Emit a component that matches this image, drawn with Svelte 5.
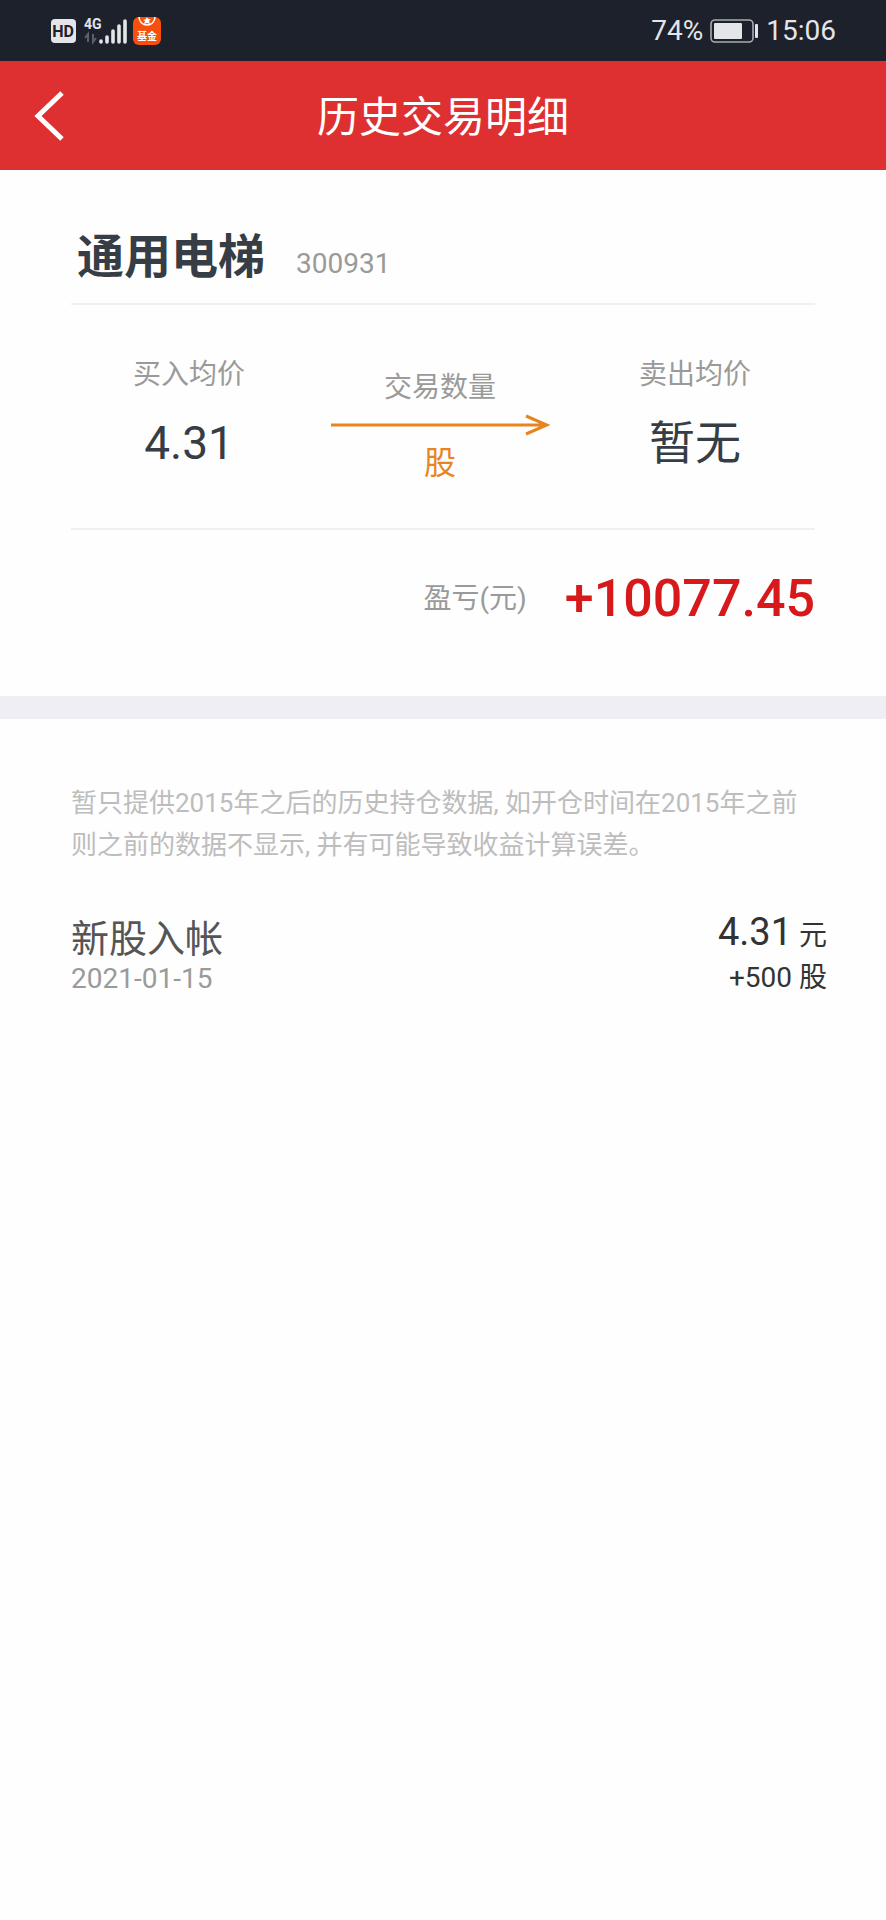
<script lang="ts">
    const stock = {
        name: "通用电梯",
        code: "300931",
        buyPrice: "4.31",
        sellPrice: "暂无",
        profit: "+10077.45",
    };

    const records = [
        {
            type: "新股入帐",
            date: "2021-01-15",
            price: "4.31",
            amount: "+500",
        },
    ];

    function goBack() {
        history.back();
    }
</script>

<svelte:head>
    <title>历史交易明细</title>
</svelte:head>

<div class="page">
    <div class="status">
        <div class="status-side">
            <svg class="hd" width="26" height="26" viewBox="0 0 26 26">
                <rect x="1" y="1" width="25" height="24" rx="4" fill="#e4e5e8" />
                <text x="13" y="19" text-anchor="middle" font-size="16" font-weight="700" fill="#1d212c">HD</text>
            </svg>
            <svg class="signal" width="44" height="28" viewBox="0 0 44 28">
                <text x="0" y="12" font-size="14" font-weight="700" fill="#e4e5e8">4G</text>
                <path d="M4 25V17L1 21M9 17V25L12 21" fill="none" stroke="#5c606a" stroke-width="2" />
                <path
                    d="M17 24v1M23 20v5M29 14v11M35 9v16M41 4v21"
                    fill="none"
                    stroke="#e4e5e8"
                    stroke-width="3.6"
                    stroke-linecap="round"
                />
            </svg>
            <svg width="28" height="28" viewBox="0 0 28 28">
                <rect width="28" height="28" rx="6" fill="#f8500c" />
                <path d="M6 0a8 8 0 0 0 16 0" fill="none" stroke="#fff" stroke-width="1.5" />
                <path d="M14 0l1 2h3l-2 2 1 3-3-1-3 1 1-3-2-1 3-1z" fill="#fff" />
                <text x="14" y="23" text-anchor="middle" font-size="10" font-weight="700" fill="#fff">基金</text>
            </svg>
        </div>
        <div class="status-side">
            <span>74%</span>
            <svg class="battery" width="49" height="24" viewBox="0 0 49 24">
                <rect x="1" y="1" width="42" height="22" rx="4" fill="none" stroke="#a9abb0" stroke-width="1.6" />
                <rect x="4" y="4" width="28" height="16" rx="1" fill="#e4e5e8" />
                <rect x="45" y="5" width="3" height="14" rx="1" fill="#e4e5e8" />
            </svg>
            <span>15:06</span>
        </div>
    </div>

    <header>
        <button class="back" aria-label="返回" on:click={goBack}>
            <svg width="32" height="50" viewBox="0 0 32 50">
                <path d="M29 2L5 25L29 48" fill="none" stroke="#fff" stroke-width="5" />
            </svg>
        </button>
        <h1>历史交易明细</h1>
    </header>

    <section class="summary">
        <div class="stock">
            <h2>{stock.name}</h2>
            <span class="code">{stock.code}</span>
        </div>

        <div class="trade">
            <div class="price">
                <span class="label">买入均价</span>
                <span class="value">{stock.buyPrice}</span>
            </div>
            <div class="quantity">
                <span class="label">交易数量</span>
                <svg width="220" height="22" viewBox="0 0 220 22">
                    <path d="M1 11H215M196 2L217 11L196 20" fill="none" stroke="#e8841f" stroke-width="3" />
                </svg>
                <span class="unit">股</span>
            </div>
            <div class="price">
                <span class="label">卖出均价</span>
                <span class="value">{stock.sellPrice}</span>
            </div>
        </div>

        <div class="profit">
            <span class="label">盈亏(元)</span>
            <strong>{stock.profit}</strong>
        </div>
    </section>

    <section class="history">
        <p class="note">
            暂只提供2015年之后的历史持仓数据, 如开仓时间在2015年之前则之前的数据不显示, 并有可能导致收益计算误差。
        </p>

        <ul>
            {#each records as r}
                <li>
                    <div class="left">
                        <span class="type">{r.type}</span>
                        <span class="date">{r.date}</span>
                    </div>
                    <div class="right">
                        <span class="cost"><b>{r.price}</b> 元</span>
                        <span class="amount">{r.amount} 股</span>
                    </div>
                </li>
            {/each}
        </ul>
    </section>
</div>

<style>
    :global(body) {
        margin: 0;
        background: #fefefe;
    }

    .page {
        font-family: Roboto, "Noto Sans CJK SC", sans-serif;
        font-size: 28px;
        color: #363d45;
    }

    svg {
        display: block;
    }

    .status {
        display: flex;
        justify-content: space-between;
        align-items: center;
        height: 61px;
        padding: 0 50px;
        background: #1d212c;
        color: #e4e5e8;
    }

    .status-side {
        display: flex;
        align-items: center;
    }

    .signal {
        margin: 0 5px 0 8px;
    }

    .battery {
        margin: 0 7px;
    }

    header {
        display: grid;
        grid-template-columns: 100px 1fr 100px;
        align-items: center;
        height: 109px;
        background: #de3031;
        color: #fff;
    }

    .back {
        padding: 0 0 0 33px;
        border: none;
        background: none;
        cursor: pointer;
    }

    h1 {
        margin: 0;
        padding-top: 4px;
        font-size: 42px;
        font-weight: 400;
        line-height: 60px;
        text-align: center;
    }

    .summary {
        padding: 51px 71px 60px;
        border-bottom: 23px solid #efeef4;
    }

    .stock {
        display: flex;
        align-items: baseline;
        gap: 31px;
        padding: 0 6px 10px;
        border-bottom: 2px solid #f0f0f0;
    }

    h2 {
        margin: 0;
        font-size: 47px;
        font-weight: 700;
        line-height: 72px;
    }

    .code,
    .label,
    .date {
        color: #9a9a9a;
    }

    .trade {
        display: grid;
        grid-template-columns: 236px 1fr 240px;
        padding: 50px 0 44px;
        border-bottom: 2px solid #f0f0f0;
    }

    .price,
    .quantity {
        display: flex;
        flex-direction: column;
        align-items: center;
    }

    .price {
        gap: 16px;
    }

    .label {
        line-height: 40px;
    }

    .value {
        font-size: 46px;
        line-height: 64px;
    }

    .quantity {
        padding: 13px 2px 0 0;
        gap: 6px;
    }

    .unit {
        font-size: 32px;
        line-height: 42px;
        color: #e8841f;
    }

    .profit {
        display: flex;
        justify-content: flex-end;
        align-items: center;
        gap: 38px;
        padding-top: 32px;
    }

    strong {
        font-size: 52px;
        font-weight: 500;
        line-height: 74px;
        color: #d7191c;
    }

    .history {
        padding: 63px 59px 40px 71px;
    }

    .note {
        margin: 0 12px 0 0;
        font-size: 26px;
        line-height: 42px;
        color: #bdbdbd;
    }

    ul {
        margin: 45px 0 0;
        padding: 0;
        list-style: none;
    }

    li {
        display: flex;
        justify-content: space-between;
    }

    .left,
    .right {
        display: flex;
        flex-direction: column;
    }

    .right {
        align-items: flex-end;
        color: #333;
    }

    .type {
        font-size: 38px;
        line-height: 56px;
        color: #555;
    }

    .date {
        line-height: 24px;
    }

    .cost {
        line-height: 42px;
    }

    .cost b {
        font-size: 38px;
        font-weight: 400;
    }

    .amount {
        line-height: 42px;
    }
</style>
